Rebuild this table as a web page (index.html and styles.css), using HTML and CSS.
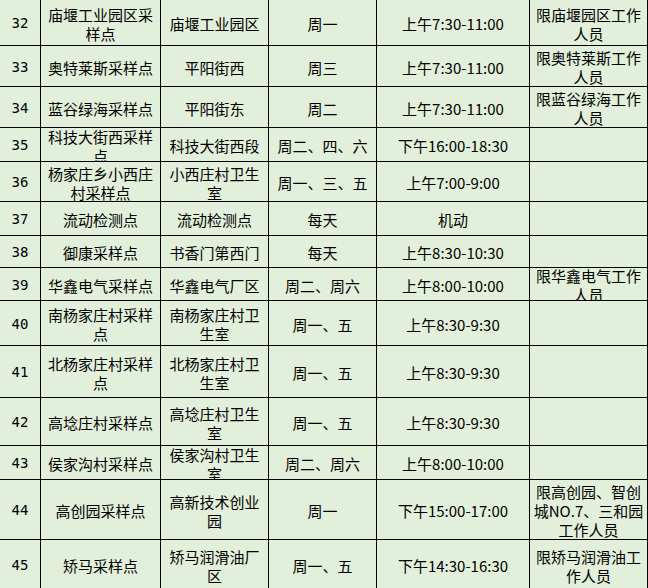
FILE: index.html
```html
<!DOCTYPE html>
<html lang="zh-CN">
<head>
<meta charset="utf-8">
<title>采样点安排</title>
<link rel="stylesheet" href="styles.css">
</head>
<body>
<div class="sheet">
  <div class="c num">32</div><div class="c">庙堰工业园区采<br>样点</div><div class="c">庙堰工业园区</div><div class="c">周一</div><div class="c">上午7:30-11:00</div><div class="c">限庙堰园区工作<br>人员</div>
  <div class="c num">33</div><div class="c">奥特莱斯采样点</div><div class="c">平阳街西</div><div class="c">周三</div><div class="c">上午7:30-11:00</div><div class="c">限奥特莱斯工作<br>人员</div>
  <div class="c num">34</div><div class="c">蓝谷绿海采样点</div><div class="c">平阳街东</div><div class="c">周二</div><div class="c">上午7:30-11:00</div><div class="c">限蓝谷绿海工作<br>人员</div>
  <div class="c num">35</div><div class="c">科技大街西采样<br>点</div><div class="c">科技大街西段</div><div class="c">周二、四、六</div><div class="c">下午16:00-18:30</div><div class="c"></div>
  <div class="c num">36</div><div class="c">杨家庄乡小西庄<br>村采样点</div><div class="c">小西庄村卫生<br>室</div><div class="c">周一、三、五</div><div class="c">上午7:00-9:00</div><div class="c"></div>
  <div class="c num">37</div><div class="c">流动检测点</div><div class="c">流动检测点</div><div class="c">每天</div><div class="c">机动</div><div class="c"></div>
  <div class="c num">38</div><div class="c">御康采样点</div><div class="c">书香门第西门</div><div class="c">每天</div><div class="c">上午8:30-10:30</div><div class="c"></div>
  <div class="c num">39</div><div class="c">华鑫电气采样点</div><div class="c">华鑫电气厂区</div><div class="c">周二、周六</div><div class="c">上午8:00-10:00</div><div class="c">限华鑫电气工作<br>人员</div>
  <div class="c num">40</div><div class="c">南杨家庄村采样<br>点</div><div class="c">南杨家庄村卫<br>生室</div><div class="c">周一、五</div><div class="c">上午8:30-9:30</div><div class="c"></div>
  <div class="c num">41</div><div class="c">北杨家庄村采样<br>点</div><div class="c">北杨家庄村卫<br>生室</div><div class="c">周一、五</div><div class="c">上午8:30-9:30</div><div class="c"></div>
  <div class="c num">42</div><div class="c">高埝庄村采样点</div><div class="c">高埝庄村卫生<br>室</div><div class="c">周一、五</div><div class="c">上午8:30-9:30</div><div class="c"></div>
  <div class="c num">43</div><div class="c">侯家沟村采样点</div><div class="c">侯家沟村卫生<br>室</div><div class="c">周二、周六</div><div class="c">上午8:00-10:00</div><div class="c"></div>
  <div class="c num">44</div><div class="c">高创园采样点</div><div class="c">高新技术创业<br>园</div><div class="c">周一</div><div class="c">下午15:00-17:00</div><div class="c">限高创园、智创<br>城NO.7、三和园<br>工作人员</div>
  <div class="c num">45</div><div class="c">矫马采样点</div><div class="c">矫马润滑油厂<br>区</div><div class="c">周一、五</div><div class="c">下午14:30-16:30</div><div class="c">限矫马润滑油工<br>作人员</div>
</div>
</body>
</html>
```

FILE: styles.css
```css
html, body {
  margin: 0;
  padding: 0;
  background: #e2efda;
}

body {
  font-family: "Noto Sans CJK SC", "Noto Sans", sans-serif;
  font-size: 15px;
  color: #000;
  overflow: hidden;
}

.sheet {
  display: grid;
  grid-template-columns: 40px 119px 107px 107px 152px 117px;
  grid-template-rows: 45px 40px 40px 33px 39px 33px 31px 32px 44px 51px 47px 33px 59px 49px;
  gap: 1px;
  width: 647px;
  background: #000;
  border-right: 1px solid #000;
}

.c {
  background: #e2efda;
  display: flex;
  align-items: center;
  justify-content: center;
  text-align: center;
  white-space: nowrap;
  overflow: hidden;
  line-height: 19px;
  padding-top: 2px;
  box-sizing: border-box;
}

.num {
  font-family: "DejaVu Sans Mono", "Liberation Mono", monospace;
  font-size: 14px;
}
```
